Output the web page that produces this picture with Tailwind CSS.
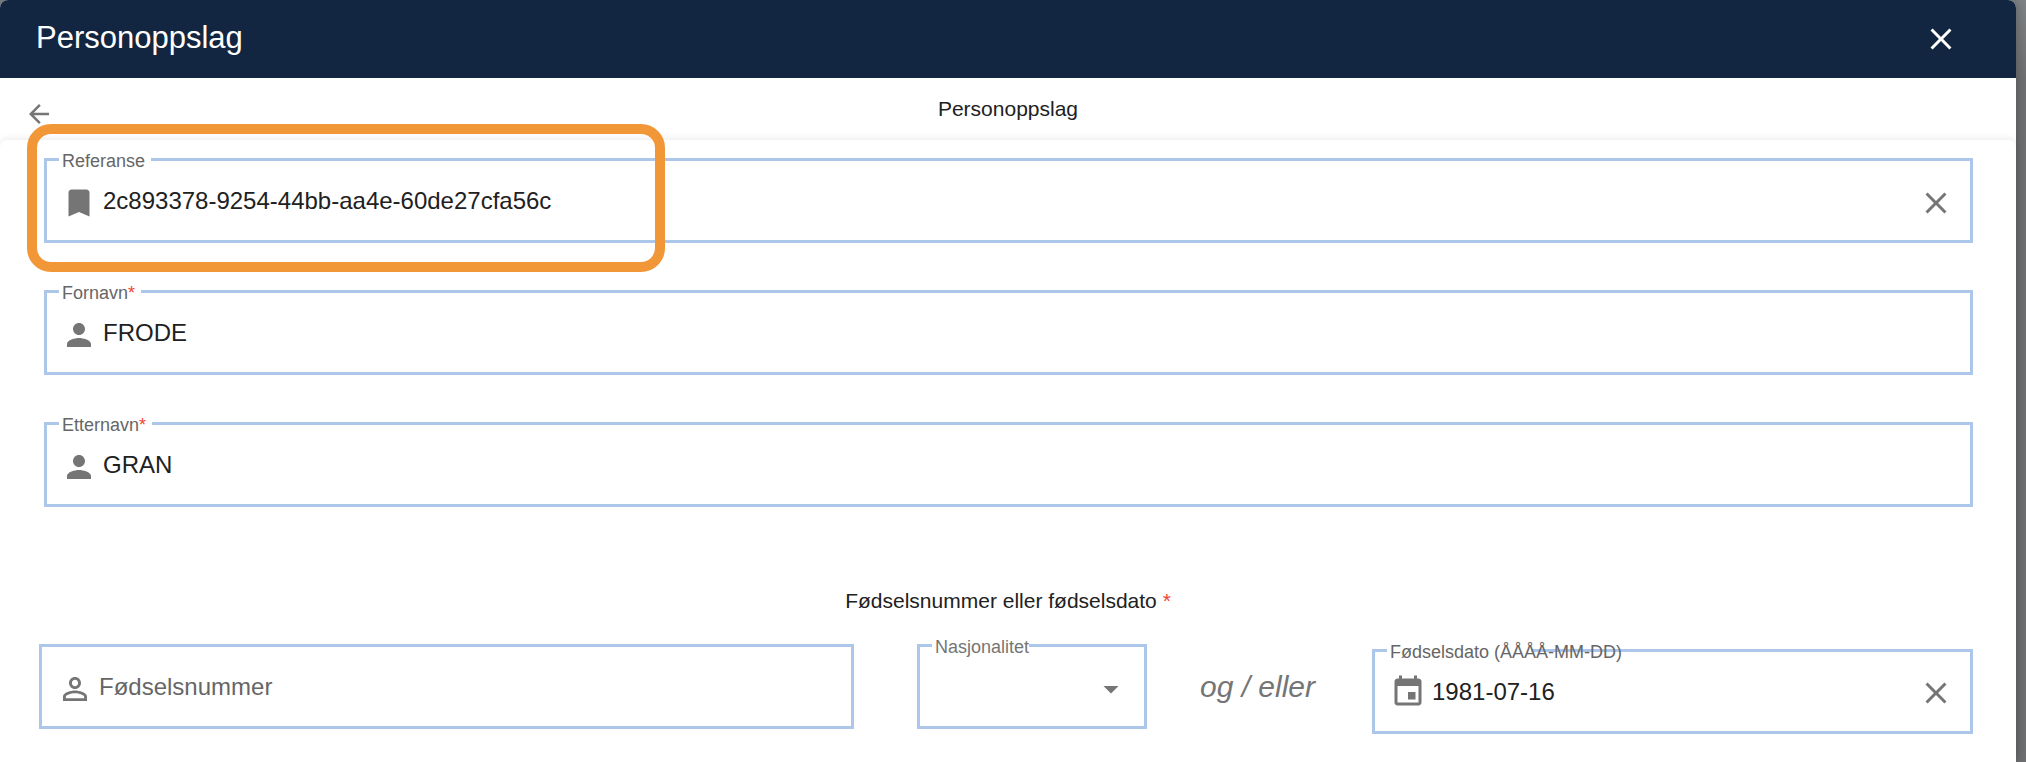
<!DOCTYPE html>
<html lang="no">
<head>
<meta charset="UTF-8" />
<meta name="viewport" content="width=device-width, initial-scale=1.0" />
<title>Personoppslag</title>
<script src="https://cdn.jsdelivr.net/npm/@tailwindcss/browser@4"></script>
</head>
<body class="bg-[#6f7072] bg-linear-to-b from-[#808385] to-[#6f7072] to-[80px] pr-[10px] font-['Liberation_Sans',Arial,sans-serif] text-[#212121]">
<main class="flex min-h-screen flex-col rounded-t-lg bg-white shadow-[0_0_12px_rgba(0,0,0,0.3)]">
    <header class="flex h-[78px] items-center justify-between rounded-t-lg bg-[#132641] pl-9 pr-[57px] text-white">
        <h1 class="pb-0.5 text-[31px] leading-9">Personoppslag</h1>
        <button type="button" aria-label="Lukk">
            <svg class="size-9" viewBox="0 0 24 24" fill="currentColor"><path d="M19 6.41L17.59 5 12 10.59 6.41 5 5 6.41 10.59 12 5 17.59 6.41 19 12 13.41 17.59 19 19 17.59 13.41 12z"/></svg>
        </button>
    </header>

    <nav class="grid h-[62px] grid-cols-[1fr_auto_1fr] items-center px-6">
        <button type="button" class="mt-2.5 justify-self-start text-[#757575]" aria-label="Tilbake">
            <svg class="size-[30px]" viewBox="0 0 24 24" fill="currentColor"><path d="M20 11H7.83l5.59-5.59L12 4l-8 8 8 8 1.41-1.41L7.83 13H20v-2z"/></svg>
        </button>
        <h2 class="text-[21px]">Personoppslag</h2>
    </nav>

    <form class="flex-1 rounded-t-lg bg-white pt-[18px] shadow-[0_-2px_6px_rgba(0,0,0,0.07)]">
        <div class="flex flex-col gap-[47px] pl-[44px] pr-[43px]">
            <div class="relative flex h-[85px] items-center border-3 border-[#adc7eb] pl-3.5 pr-4">
                <label for="referanse" class="absolute -top-2.5 left-3 bg-white pl-[3px] pr-1.5 text-lg leading-5 text-[#666]">Referanse</label>
                <svg class="mt-1 size-9 shrink-0 text-[#757575]" viewBox="0 0 24 24" fill="currentColor"><path d="M17 3H7c-1.1 0-1.99.9-1.99 2L5 21l7-3 7 3V5c0-1.1-.9-2-2-2z"/></svg>
                <input id="referanse" type="text" value="2c893378-9254-44bb-aa4e-60de27cfa56c" class="ml-1.5 min-w-0 flex-1 text-2xl outline-none" />
                <button type="button" class="mt-1 text-[#757575]" aria-label="Tøm referanse">
                    <svg class="size-9" viewBox="0 0 24 24" fill="currentColor"><path d="M19 6.41L17.59 5 12 10.59 6.41 5 5 6.41 10.59 12 5 17.59 6.41 19 12 13.41 17.59 19 19 17.59 13.41 12z"/></svg>
                </button>
                <!-- highlight -->
                <div class="pointer-events-none absolute -left-5 -top-[37px] h-[148px] w-[638px] rounded-3xl border-10 border-[#f19737]"></div>
            </div>

            <div class="relative flex h-[85px] items-center border-3 border-[#adc7eb] pl-3.5 pr-4">
                <label for="fornavn" class="absolute -top-2.5 left-3 bg-white pl-[3px] pr-1.5 text-lg leading-5 text-[#666]">Fornavn<span class="text-[#f44336]">*</span></label>
                <svg class="mt-1 size-9 shrink-0 text-[#757575]" viewBox="0 0 24 24" fill="currentColor"><path d="M12 12c2.21 0 4-1.79 4-4s-1.79-4-4-4-4 1.79-4 4 1.79 4 4 4zm0 2c-2.67 0-8 1.34-8 4v2h16v-2c0-2.66-5.33-4-8-4z"/></svg>
                <input id="fornavn" type="text" value="FRODE" required class="ml-1.5 min-w-0 flex-1 text-2xl outline-none" />
            </div>

            <div class="relative flex h-[85px] items-center border-3 border-[#adc7eb] pl-3.5 pr-4">
                <label for="etternavn" class="absolute -top-2.5 left-3 bg-white pl-[3px] pr-1.5 text-lg leading-5 text-[#666]">Etternavn<span class="text-[#f44336]">*</span></label>
                <svg class="mt-1 size-9 shrink-0 text-[#757575]" viewBox="0 0 24 24" fill="currentColor"><path d="M12 12c2.21 0 4-1.79 4-4s-1.79-4-4-4-4 1.79-4 4 1.79 4 4 4zm0 2c-2.67 0-8 1.34-8 4v2h16v-2c0-2.66-5.33-4-8-4z"/></svg>
                <input id="etternavn" type="text" value="GRAN" required class="ml-1.5 min-w-0 flex-1 text-2xl outline-none" />
            </div>
        </div>

        <h3 class="mt-[78px] text-center text-[21px] leading-8">Fødselsnummer eller fødselsdato <span class="text-[#f44336]">*</span></h3>

        <div class="mt-[27px] grid grid-cols-[815fr_293fr_225fr_601fr] items-start pl-[39px] pr-[43px]">
            <div class="flex h-[85px] items-center border-3 border-[#adc7eb] px-[15px]">
                <svg class="mt-1 size-9 shrink-0 text-[#757575]" viewBox="0 0 24 24" fill="currentColor"><path d="M12 5.9c1.16 0 2.1.94 2.1 2.1s-.94 2.1-2.1 2.1S9.9 9.16 9.9 8s.94-2.1 2.1-2.1m0 9c2.97 0 6.1 1.46 6.1 2.1v1.1H5.9V17c0-.64 3.13-2.1 6.1-2.1M12 4C9.79 4 8 5.79 8 8s1.79 4 4 4 4-1.79 4-4-1.79-4-4-4zm0 9c-2.67 0-8 1.34-8 4v3h16v-3c0-2.66-5.33-4-8-4z"/></svg>
                <input type="text" aria-label="Fødselsnummer" placeholder="Fødselsnummer" class="ml-1.5 min-w-0 flex-1 text-2xl outline-none placeholder:text-[#666]" />
            </div>

            <div class="pl-[63px]">
                <div class="relative flex h-[85px] items-center border-3 border-[#adc7eb] px-[15px]">
                    <label for="nasjonalitet" class="absolute -top-2.5 left-3 bg-white pl-[3px] text-lg leading-5 text-[#757575]">Nasjonalitet</label>
                    <select id="nasjonalitet" class="min-w-0 flex-1 appearance-none text-2xl outline-none">
                        <option></option>
                    </select>
                    <svg class="mt-1 size-9 shrink-0 text-[#757575]" viewBox="0 0 24 24" fill="currentColor"><path d="M7 10l5 5 5-5z"/></svg>
                </div>
            </div>

            <p class="self-center pb-1 pr-1 text-center text-[30px] leading-9 italic text-[#757575]">og / eller</p>

            <div class="relative mt-[5px] flex h-[85px] items-center border-3 border-[#adc7eb] pl-[15px] pr-4">
                <!-- the notch is narrower than the label, so the border runs on behind the text -->
                <label for="fodselsdato" class="absolute -top-2.5 left-3 w-36 bg-white pl-[3px] text-lg leading-5 whitespace-nowrap text-[#666]">Fødselsdato (ÅÅÅÅ-MM-DD)</label>
                <svg class="size-9 shrink-0 text-[#757575]" viewBox="0 0 24 24" fill="currentColor"><path d="M17 12h-5v5h5v-5zM16 1v2H8V1H6v2H5c-1.11 0-1.99.9-1.99 2L3 19c0 1.1.89 2 2 2h14c1.1 0 2-.9 2-2V5c0-1.1-.9-2-2-2h-1V1h-2zm3 18H5V8h14v11z"/></svg>
                <input id="fodselsdato" type="text" value="1981-07-16" class="ml-1.5 min-w-0 flex-1 text-2xl outline-none" />
                <button type="button" class="mt-0.5 text-[#757575]" aria-label="Tøm fødselsdato">
                    <svg class="size-9" viewBox="0 0 24 24" fill="currentColor"><path d="M19 6.41L17.59 5 12 10.59 6.41 5 5 6.41 10.59 12 5 17.59 6.41 19 12 13.41 17.59 19 19 17.59 13.41 12z"/></svg>
                </button>
            </div>
        </div>
    </form>
</main>
</body>
</html>
